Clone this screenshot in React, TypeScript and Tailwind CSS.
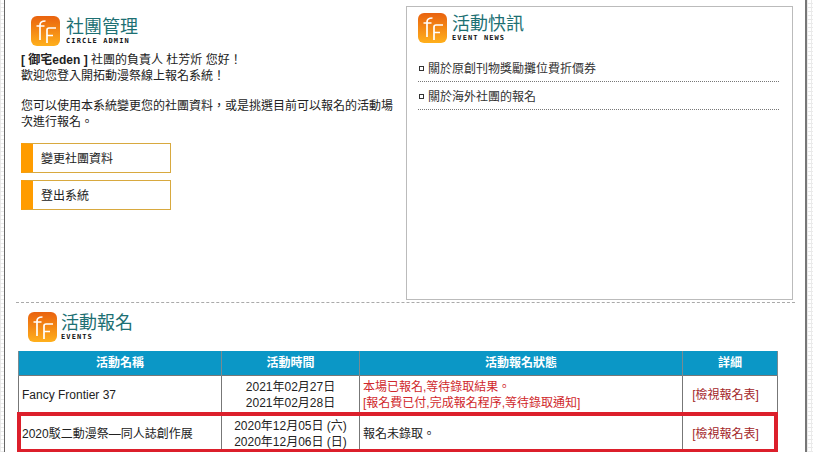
import React from 'react';

const cjk = "font-['Liberation_Sans','Noto_Sans_CJK_TC',sans-serif]";
const strip = 'bg-[image:repeating-linear-gradient(0deg,#eaeaea_0,#eaeaea_1px,transparent_1px,transparent_4px),repeating-linear-gradient(90deg,#eaeaea_0,#eaeaea_1px,transparent_1px,transparent_4px)]';

function Logo() {
  return (
    <svg width="32" height="32" viewBox="0 0 32 32" className="shrink-0">
      <defs>
        <linearGradient id="ff" x1="0" y1="0" x2="0" y2="1">
          <stop offset="0" stopColor="#e9620f" />
          <stop offset="1" stopColor="#ffb01c" />
        </linearGradient>
      </defs>
      <rect x="1" y="1" width="29" height="30" rx="6" fill="url(#ff)" />
      <path d="M10 25V10c0-3 2-4 5.500-4M6.500 11H14.500M17 28V15c0-1.500 1-2 2-2h7M17 20.500h6" fill="none" stroke="#fff" strokeWidth="1.700" />
    </svg>
  );
}

function Heading({ title, sub, gap }: { title: string; sub: string; gap: string }) {
  return (
    <div className={`flex items-start ${gap}`}>
      <Logo />
      <div className="flex flex-col">
        <span className="text-[18px] leading-[21px] text-[#1d7073] font-['Noto_Sans_CJK_TC',sans-serif]">{title}</span>
        <span className="mt-[1px] font-['DejaVu_Sans_Mono',monospace] text-[7px] font-bold leading-[8px] tracking-[1.100px] text-[#111]">{sub}</span>
      </div>
    </div>
  );
}

function SideButton({ label }: { label: string }) {
  return (
    <a className="flex h-[30px] w-[150px] items-center border border-[#d8a93f] border-l-[12px] border-l-[#ff9c00] pl-[8px] pt-[1px] text-[12px] text-[#222]">
      {label}
    </a>
  );
}

function NewsItem({ label }: { label: string }) {
  return (
    <li className="flex h-[28px] items-center gap-[4px] border-b border-dotted border-[#777] pl-[1px] pt-[2px] text-[12px] text-[#333]">
      <span className="h-[5px] w-[5px] border border-[#333]" />
      {label}
    </li>
  );
}

const th = 'border-x border-[#7a8a90] font-bold text-white text-[12px]';
const td = 'border border-[#777] text-[12px] px-[3px] text-[#222]';

export default function App() {
  return (
    <div className={`${cjk} h-[452px] w-[813px] overflow-hidden bg-white`}>
      <div className="flex h-full">
        <div className={`w-[5px] shrink-0 border-r border-[#666] ${strip}`} />
        <main className="w-[800px] pl-[11px]">
          <div className="flex h-[303px] w-[779px] border-b border-dashed border-[#aaa]">
            <section className="w-[390px] pl-[5px] pt-[15px]">
              <div className="pl-[9px]">
                <Heading title="社團管理" sub="CIRCLE ADMIN" gap="gap-[4px]" />
              </div>
              <p className="mt-[5px] text-[12px] leading-[16px] text-[#222]">
                <b>[ 御宅eden ]</b> 社團的負責人 杜芳炘 您好！
                <br />
                歡迎您登入開拓動漫祭線上報名系統！
              </p>
              <p className="mt-[14px] w-[373px] text-[12px] leading-[16px] text-[#222]">
                您可以使用本系統變更您的社團資料，或是挑選目前可以報名的活動場次進行報名。
              </p>
              <div className="mt-[13px] flex flex-col gap-[7px]">
                <SideButton label="變更社團資料" />
                <SideButton label="登出系統" />
              </div>
            </section>
            <section className="mt-[6px] h-[294px] w-[387px] border border-[#bbb] pl-[10px] pt-[5px]">
              <Heading title="活動快訊" sub="EVENT NEWS" gap="gap-[3px]" />
              <ul className="ml-[1px] mt-[10px] w-[361px]">
                <NewsItem label="關於原創刊物獎勵攤位費折價券" />
                <NewsItem label="關於海外社團的報名" />
              </ul>
            </section>
          </div>
          <section className="pl-[2px] pt-[8px]">
            <div className="pl-[9px]">
              <Heading title="活動報名" sub="EVENTS" gap="gap-[2px]" />
            </div>
            <div className="relative mt-[8px] w-[760px]">
              <table className="w-[760px] table-fixed border-collapse">
                <thead>
                  <tr className="h-[24px] bg-[#0b97c6]">
                    <th className={`${th} w-[203px]`}>活動名稱</th>
                    <th className={`${th} w-[138px]`}>活動時間</th>
                    <th className={`${th} w-[323px]`}>活動報名狀態</th>
                    <th className={th}>詳細</th>
                  </tr>
                </thead>
                <tbody>
                  <tr className="h-[39px]">
                    <td className={td}>Fancy Frontier 37</td>
                    <td className={`${td} text-center leading-[16px]`}>2021年02月27日<br />2021年02月28日</td>
                    <td className={`${td} leading-[16px] text-[#d0282c]`}>本場已報名,等待錄取結果。<br />[報名費已付,完成報名程序,等待錄取通知]</td>
                    <td className={`${td} pr-[12px] text-center text-[#a3262a]`}>[檢視報名表]</td>
                  </tr>
                  <tr className="h-[39px]">
                    <td className={td}>2020駁二動漫祭—同人誌創作展</td>
                    <td className={`${td} text-center leading-[16px]`}>2020年12月05日 (六)<br />2020年12月06日 (日)</td>
                    <td className={td}>報名未錄取。</td>
                    <td className={`${td} pr-[12px] text-center text-[#a3262a]`}>[檢視報名表]</td>
                  </tr>
                </tbody>
              </table>
              {/* red highlight drawn over the second row */}
              <div className="absolute left-[-1px] top-[61px] h-[41px] w-[761px] border-[4px] border-[#dc1f2b]" />
            </div>
          </section>
        </main>
        <div className={`w-[8px] shrink-0 border-l-2 border-[#777] ${strip}`} />
      </div>
    </div>
  );
}
